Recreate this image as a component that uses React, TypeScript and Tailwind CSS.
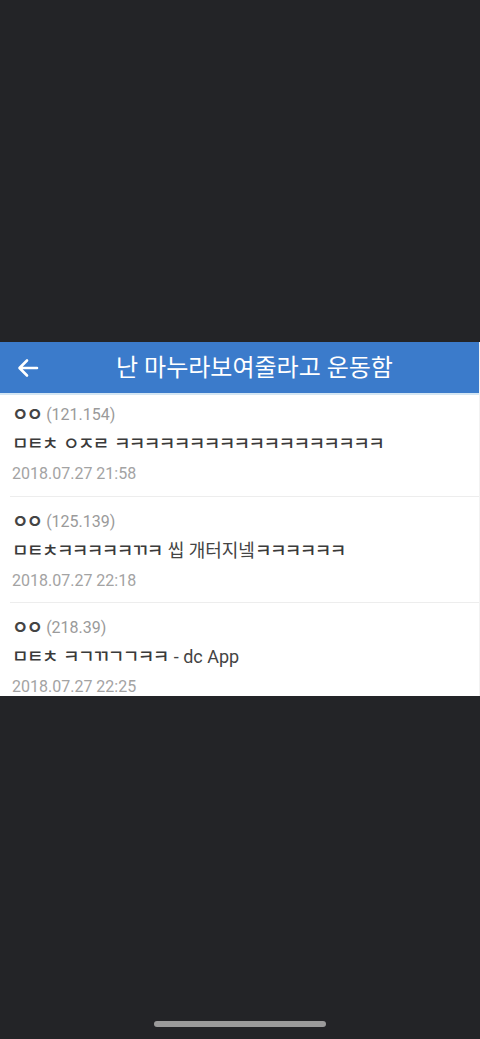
import React from "react";

const items = [
  { ip: "(121.154)", body: "ㅁㅌㅊ ㅇㅈㄹ ㅋㅋㅋㅋㅋㅋㅋㅋㅋㅋㅋㅋㅋㅋㅋㅋㅋㅋ", date: "2018.07.27 21:58", pt: "pt-[5px]", pb: "pb-[7px]" },
  { ip: "(125.139)", body: "ㅁㅌㅊㅋㅋㅋㅋㅋㄲㅋ 씹 개터지넼ㅋㅋㅋㅋㅋㅋ", date: "2018.07.27 22:18", pt: "pt-[10px]", pb: "pb-[6px]" },
  { ip: "(218.39)", body: "ㅁㅌㅊ ㅋㄱㄲㄱㄱㅋㅋ - dc App", date: "2018.07.27 22:25", pt: "pt-[10px]", pb: "pb-[6px]" },
];

function Body({ text }: { text: string }) {
  const parts = text.split(/([\u3131-\u318E]+)/).filter((p) => p.length > 0);
  return (
    <>
      {parts.map((p, i) =>
        /^[\u3131-\u318E]+$/.test(p) ? (
          <span key={i} className="text-[18px] tracking-[-1.6px] font-medium text-[#3a3a3a] pr-[1.6px]">
            {p}
          </span>
        ) : (
          <span key={i} className="whitespace-pre">{p}</span>
        )
      )}
    </>
  );
}

export default function App() {
  return (
    <div
      className="w-[480px] h-[1039px] bg-[#232427] flex flex-col"
      style={{ fontFamily: "Roboto, 'Noto Sans CJK KR', sans-serif" }}
    >
      <div className="h-[342px] shrink-0" />
      <div className="h-[354px] bg-white flex flex-col overflow-hidden shrink-0 border-r border-[#f2f2f2]">
        <div className="h-[51px] bg-[#3b7bcb] flex items-center relative shrink-0">
          <svg className="absolute left-[17px] top-[16px]" width="22" height="20" viewBox="0 0 22 20" fill="none">
            <path d="M20 10H3M10 2.5L2.5 10L10 17.5" stroke="white" strokeWidth="2.6" strokeLinecap="round" strokeLinejoin="round" />
          </svg>
          <div className="flex-1 text-center text-white text-[24px] leading-none pl-[30px]">
            난 마누라보여줄라고 운동함
          </div>
        </div>
        <div className="h-[2px] bg-[#d4e6f3] shrink-0" />
        {items.map((it, i) => (
          <div key={i} className="flex flex-col shrink-0">
            <div className={"flex flex-col pl-[12px] " + it.pt + " " + it.pb}>
              <div className="h-[29px] flex items-center leading-none">
                <span className="text-[#444] font-bold text-[18px] tracking-[-2px]">ㅇㅇ</span>
                <span className="text-[#9a9a9a] text-[16px] ml-[5px]">{it.ip}</span>
              </div>
              <div className="h-[30px] flex items-center text-[18px] leading-none text-[#444]">
                <Body text={it.body} />
              </div>
              <div className="h-[30px] flex items-center text-[16px] leading-none text-[#a3a3a3]">
                {it.date}
              </div>
            </div>
            {i < 2 && <div className="ml-[10px] h-[1px] bg-[#ededed]" />}
          </div>
        ))}
      </div>
      <div className="flex-1" />
      <div className="flex justify-center pb-[12px]">
        <div className="w-[172px] h-[6px] rounded-full bg-[#9a9a9a]" />
      </div>
    </div>
  );
}
